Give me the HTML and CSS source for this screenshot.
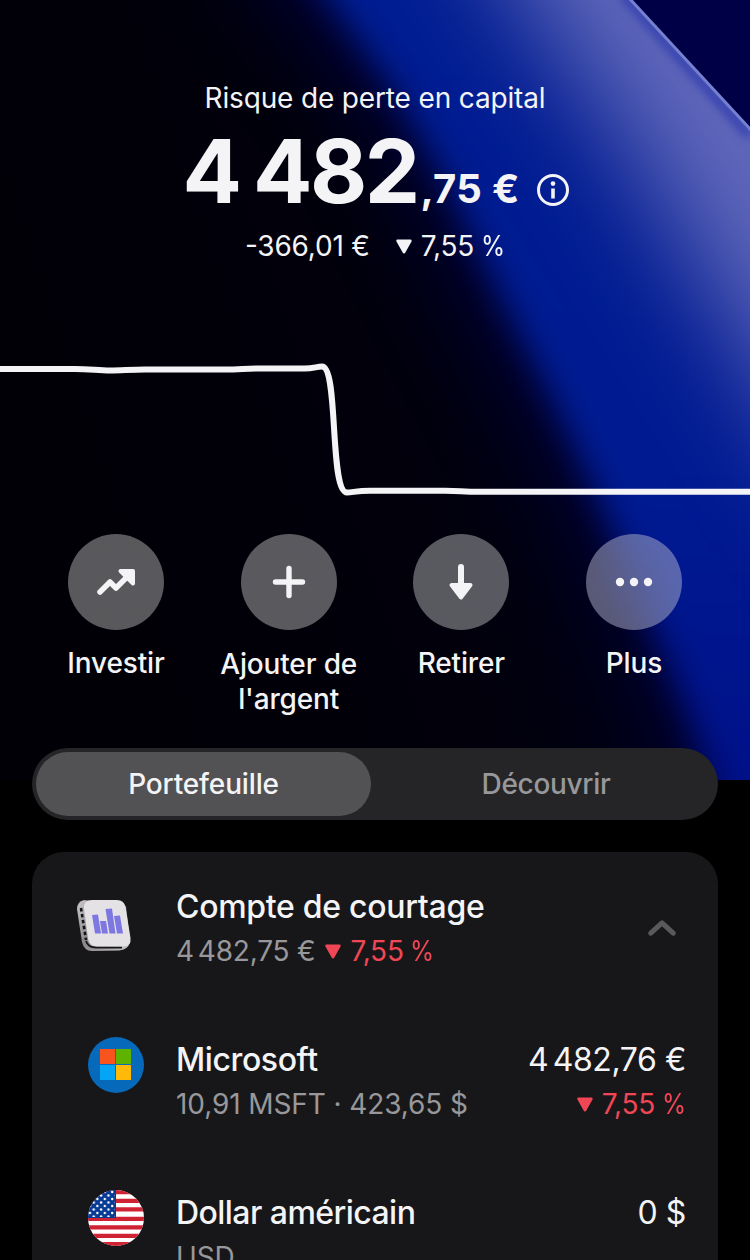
FILE: index.html
```html
<!DOCTYPE html>
<html lang="fr">
<head>
<meta charset="utf-8">
<title>Portefeuille</title>
<link rel="stylesheet" href="styles.css">
</head>
<body>
<main class="screen">
  <section class="hero">
    <svg class="backdrop" viewBox="0 0 750 780" aria-hidden="true">
      <defs>
        <linearGradient id="night" x1="0" y1="200" x2="600" y2="0" gradientUnits="userSpaceOnUse">
          <stop offset="0" stop-color="#010007"/><stop offset=".5" stop-color="#01000c"/><stop offset="1" stop-color="#000022"/>
        </linearGradient>
        <linearGradient id="beam" x1="0" y1="0" x2="0" y2="780" gradientUnits="userSpaceOnUse">
          <stop offset="0" stop-color="#001d92"/><stop offset=".6" stop-color="#001b92"/><stop offset="1" stop-color="#00118a"/>
        </linearGradient>
        <filter id="soft" x="-50%" y="-50%" width="200%" height="200%" color-interpolation-filters="sRGB"><feGaussianBlur stdDeviation="17"/></filter>
        <filter id="wide" x="-50%" y="-50%" width="200%" height="200%" color-interpolation-filters="sRGB"><feGaussianBlur stdDeviation="55"/></filter>
        <filter id="fine" color-interpolation-filters="sRGB"><feGaussianBlur stdDeviation="5"/></filter>
      </defs>
      <rect width="750" height="780" fill="url(#night)"/>
      <path d="M220-120L300 0L385 100L435 184L495 308L545 398L592 498L642 607L688 721L730 860H900V-120Z" fill="#000058" opacity=".75" filter="url(#wide)"/>
      <path d="M252-120L330 0L394 90L448 184L502 298L552 398L599 498L645 607L691 721L738 860H900V-120Z" fill="url(#beam)" filter="url(#soft)"/>
      <path d="M410-200L525 0L625 140L735 325L900 590V-200Z" fill="#6068ba" filter="url(#wide)"/>
      <path d="M622-6L750 136" fill="none" stroke="#303cae" stroke-width="8" filter="url(#fine)"/>
      <path d="M630-1L751 130V-1Z" fill="#000046"/>
      <path d="M629-2L752 131" fill="none" stroke="#7580cf" stroke-width="3"/>
    </svg>
    <p class="risk">Risque de perte en capital</p>
    <div class="balance">
      <span class="whole">4 482</span><span class="cents">,75 €</span>
      <svg class="info" viewBox="0 0 32 32"><circle cx="16" cy="16" r="14.5" fill="none" stroke="#f4f4f6" stroke-width="3"/><circle cx="16" cy="9.6" r="2.3" fill="#f4f4f6"/><path d="M16 14.5v10" stroke="#f4f4f6" stroke-width="3.6"/></svg>
    </div>
    <div class="delta">
      <span class="amount">-366,01 €</span>
      <span class="change"><svg class="tri" viewBox="0 0 16 15"><path d="M1.700 1.800H14.300L8 13Z"/></svg><span>7,55 <span class="pct">%</span></span></span>
    </div>
    <svg class="chart" viewBox="0 0 750 150"><path d="M-5 19H75C90 19 98 20.500 110 20.500C122 20.500 130 19.500 145 19.500H225C240 19.500 245 18.500 260 18.500H305C313 18.500 317 16.500 322 16.500C339 16.500 329 142.500 347 142.500C353 142.500 356 140.700 370 140.700H445C460 140.700 462 141.700 480 141.700H755"/></svg>
    <nav class="actions">
      <div class="action">
        <span class="disc"><svg viewBox="0 0 48 48"><path d="M8 34L18 24L24 30L36 18" fill="none" stroke="#f4f4f6" stroke-width="5.500" stroke-linecap="round" stroke-linejoin="round"/><path d="M28.500 13H41V25.500Z" fill="#f4f4f6" stroke="#f4f4f6" stroke-width="4" stroke-linejoin="round"/></svg></span>
        <span class="label">Investir</span>
      </div>
      <div class="action">
        <span class="disc"><svg viewBox="0 0 48 48"><path d="M24 10.500V37.500M10.500 24H37.500" stroke="#f4f4f6" stroke-width="5.400" stroke-linecap="round"/></svg></span>
        <span class="label label-two">Ajouter de l'argent</span>
      </div>
      <div class="action">
        <span class="disc"><svg viewBox="0 0 48 48"><path d="M24 9V30" stroke="#f4f4f6" stroke-width="6" stroke-linecap="round"/><path d="M14.500 27H33.500L24 39.500Z" fill="#f4f4f6" stroke="#f4f4f6" stroke-width="4" stroke-linejoin="round"/></svg></span>
        <span class="label">Retirer</span>
      </div>
      <div class="action">
        <span class="disc"><svg viewBox="0 0 48 48" fill="#f4f4f6"><circle cx="10" cy="24" r="4.200"/><circle cx="24" cy="24" r="4.200"/><circle cx="38" cy="24" r="4.200"/></svg></span>
        <span class="label">Plus</span>
      </div>
    </nav>
  </section>
  <div class="tabs"><span class="tab tab-on">Portefeuille</span><span class="tab tab-off">Découvrir</span></div>
  <section class="card">
    <div class="row">
      <svg class="badge broker" viewBox="0 0 56 56">
        <defs><linearGradient id="side" x1="0" y1="0" x2="1" y2="1"><stop offset="0" stop-color="#c9c7c9"/><stop offset=".5" stop-color="#8b878a"/><stop offset="1" stop-color="#c6c6c8"/></linearGradient></defs>
        <path d="M8 3Q1 5 1 12L6 45Q8 54 16 54L43 53.500Q52 53 54 45L50 9Z" fill="url(#side)"/>
        <path d="M5 11L10 43" fill="none" stroke="#161618" stroke-width="2.600" stroke-dasharray="3.500 2.500"/>
        <path d="M10 44Q12 50.500 20 50.500H46" fill="none" stroke="#161618" stroke-width="1.800"/>
        <path d="M16 3H41Q48 3 49.500 10L54.500 41Q55.500 49.500 47.500 49.500H21Q13.500 49.500 12 42L8 11Q7.500 3 16 3Z" fill="#e5e2e6"/>
        <path d="M16 18L22 17.500L25 36.500H19ZM24 24L30 24L32 36.500H26ZM29.500 12L36 11.500L39.500 36.500H33.500ZM38 19L44 18.500L47 36.500H41Z" fill="#7d77e2"/>
      </svg>
      <div class="info-col"><div class="name wide-name">Compte de courtage</div><div class="sub"><span class="amount">4<span class="thin"> </span>482,75 €</span><span class="change down"><svg class="tri" viewBox="0 0 16 15"><path d="M1.700 1.800H14.300L8 13Z"/></svg><span>7,55 <span class="pct">%</span></span></span></div></div>
      <svg class="chevron" viewBox="0 0 28 16"><path d="M2.800 13.200L14 2.800L25.200 13.200"/></svg>
    </div>
    <div class="row">
      <svg class="badge" viewBox="0 0 56 56"><circle cx="28" cy="28" r="28" fill="#0669ba"/><path d="M12 12h15v15H12z" fill="#f9541e"/><path d="M28 12h15v15H28z" fill="#5db300"/><path d="M12 28h15v15H12z" fill="#05a5f5"/><path d="M28 28h15v15H28z" fill="#ffb908"/></svg>
      <div class="info-col"><div class="name">Microsoft</div><div class="sub quote">10,91 MSFT · 423,65 $</div></div>
      <div class="value-col"><div class="value">4<span class="thin"> </span>482,76 €</div><div class="sub"><span class="change down"><svg class="tri" viewBox="0 0 16 15"><path d="M1.700 1.800H14.300L8 13Z"/></svg><span>7,55 <span class="pct">%</span></span></span></div></div>
    </div>
    <div class="row">
      <svg class="badge" viewBox="0 0 56 56">
        <defs>
          <clipPath id="round"><circle cx="28" cy="28" r="28"/></clipPath>
          <pattern id="stars" width="7.400" height="7" patternUnits="userSpaceOnUse"><circle cx="2" cy="2" r="1.200" fill="#fff"/><circle cx="5.700" cy="5.500" r="1.200" fill="#fff"/></pattern>
        </defs>
        <g clip-path="url(#round)"><path d="M0 0h56v56H0z" fill="#fff"/><path d="M0 2.150H56M0 10.800H56M0 19.400H56M0 28.900H56M0 37.300H56M0 45.800H56M0 54.200H56" stroke="#cf2334" stroke-width="4.300"/><path d="M0 0h28v28H0z" fill="#073a94"/><path d="M0 0h27v27H0z" fill="url(#stars)"/></g>
      </svg>
      <div class="info-col"><div class="name tight-name">Dollar américain</div><div class="sub quote">USD</div></div>
      <div class="value-col"><div class="value">0 $</div></div>
    </div>
  </section>
</main>
</body>
</html>
```
FILE: styles.css
```css
* { box-sizing: border-box; }
body { margin: 0; background: #000; }
.screen {
  width: 750px; height: 1260px; overflow: hidden; position: relative;
  font-family: Inter, "Liberation Sans", sans-serif; color: #f4f4f6;
  white-space: nowrap;
}
.hero { position: relative; isolation: isolate; height: 748px; padding-top: 80px; }
.backdrop { position: absolute; inset: 0; z-index: -1; width: 750px; height: 780px; }
svg { display: block; flex: none; }
.risk { margin: 0; font-size: 28px; line-height: 36px; letter-spacing: -.15px; text-align: center; }
.balance { display: flex; justify-content: center; align-items: baseline; height: 88px; margin: 11px 0 13px; padding-left: 1px; font-weight: 700; }
.whole { font-size: 88px; line-height: 88px; letter-spacing: -2.6px; word-spacing: -4.5px; }
.cents { font-size: 40px; line-height: 48px; margin-left: 3px; letter-spacing: .3px; }
.info { width: 32px; height: 32px; margin-left: 17px; align-self: flex-start; margin-top: 47px; }
.delta { display: flex; justify-content: center; gap: 26px; font-size: 28px; line-height: 36px; }
.amount { letter-spacing: -.2px; font-feature-settings: "case"; }
.change { display: inline-flex; align-items: center; gap: 9px; letter-spacing: -.2px; }
.pct { display: inline-block; transform: scaleX(.88); transform-origin: left; margin-left: -1px; margin-right: -3px; }
.thin { display: inline-block; width: .14em; white-space: pre; }
.tri { width: 16px; height: 15px; fill: currentColor; stroke: currentColor; stroke-width: 2.8; stroke-linejoin: round; }
.chart { width: 750px; height: 150px; margin-top: 86px; }
.chart path { fill: none; stroke: #f4f4f6; stroke-width: 6; stroke-linejoin: round; }
.actions { display: flex; justify-content: space-between; padding: 0 30px; margin-top: 34px; }
.action { width: 172px; display: flex; flex-direction: column; align-items: center; }
.disc { width: 96px; height: 96px; border-radius: 50%; background: rgba(255,255,255,.35); backdrop-filter: blur(40px); display: grid; place-items: center; }
.disc svg { width: 48px; height: 48px; }
.label { margin-top: 16px; font-size: 28px; line-height: 35px; font-weight: 500; letter-spacing: -.15px; text-align: center; }
.label-two { width: 150px; white-space: normal; margin-top: 17px; }
.tabs { position: relative; margin: 0 32px; height: 72px; border-radius: 36px; background: #252527; padding: 4px; display: flex; }
.tab { flex: 1 1 0; display: grid; place-items: center; border-radius: 32px; font-size: 28px; font-weight: 500; letter-spacing: -.15px; color: #98989b; }
.tab-on { background: #525254; color: #f4f4f6; flex: 0 0 335px; }
.tab-off { padding-left: 7px; letter-spacing: -.3px; }
.card { margin: 32px 32px 0; height: 460px; border-radius: 32px; background: #171719; padding: 32px 32px 0 56px; display: flex; flex-direction: column; gap: 69px; }
.row { display: flex; height: 84px; }
.badge { width: 56px; height: 56px; }
.broker { margin: 13px 12px 0 -12px; }
.info-col { margin-left: 32px; padding-top: 1px; }
.name, .value { font-size: 32px; line-height: 44px; font-weight: 500; letter-spacing: -.4px; }
.wide-name { letter-spacing: -.3px; }
.tight-name { letter-spacing: -.55px; }
.value { font-weight: 400; }
.sub { margin-top: 4px; display: flex; gap: 10px; font-size: 28px; line-height: 36px; color: #98989b; }
.quote { letter-spacing: -.1px; }
.value-col { margin-left: auto; padding-top: 1px; display: flex; flex-direction: column; align-items: flex-end; }
.down { color: #f14655; }
.chevron { width: 28px; height: 16px; margin: 36px 10px 0 auto; }
.chevron path { fill: none; stroke: #59595b; stroke-width: 5; stroke-linecap: round; stroke-linejoin: round; }
```
